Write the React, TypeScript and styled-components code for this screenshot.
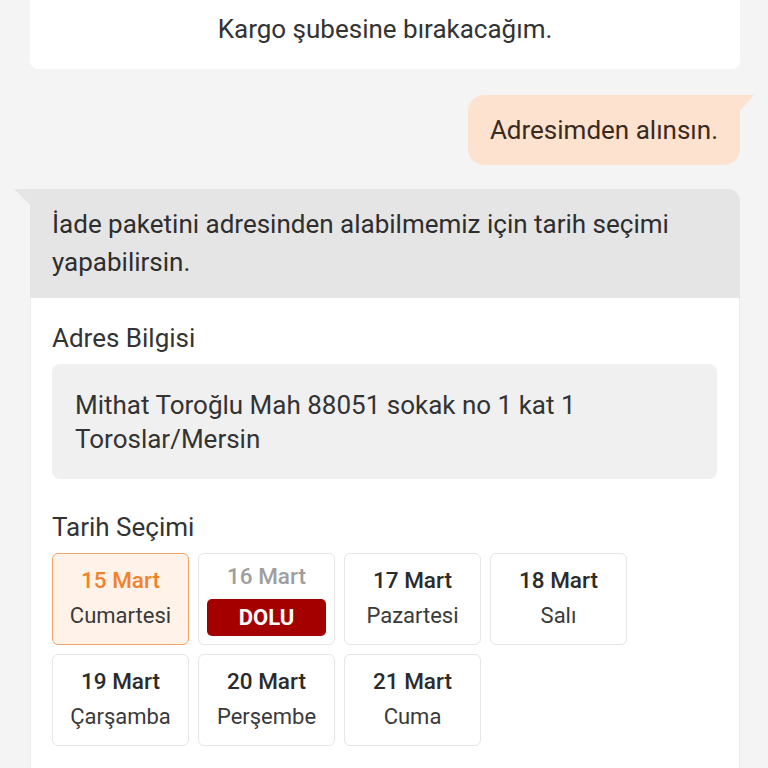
import styled, { createGlobalStyle } from 'styled-components';

const GlobalStyle = createGlobalStyle`
  html, body {
    margin: 0;
    padding: 0;
    background: #f4f4f4;
  }
  body {
    font-family: Roboto, 'Noto Sans', sans-serif;
    color: #333333;
    overflow: hidden;
  }
`;

type Day = {
  date: string;
  name: string;
  selected?: boolean;
  full?: boolean;
};

const days: Day[] = [
  { date: '15 Mart', name: 'Cumartesi', selected: true },
  { date: '16 Mart', name: '', full: true },
  { date: '17 Mart', name: 'Pazartesi' },
  { date: '18 Mart', name: 'Salı' },
  { date: '19 Mart', name: 'Çarşamba' },
  { date: '20 Mart', name: 'Perşembe' },
  { date: '21 Mart', name: 'Cuma' },
];

const Page = styled.div`
  width: 768px;
  height: 768px;
  overflow: hidden;
  padding: 0 28px 0 30px;
  box-sizing: border-box;
  display: flex;
  flex-direction: column;
`;

const OptionCard = styled.div`
  margin-top: -20px;
  background: #ffffff;
  border-radius: 8px;
  padding: 32px 0 23px;
  text-align: center;
  font-size: 26px;
  line-height: 34px;
`;

const UserRow = styled.div`
  margin-top: 26px;
  display: flex;
  justify-content: flex-end;
`;

const UserBubble = styled.div`
  position: relative;
  background: #fde3cf;
  border-radius: 16px 0 16px 16px;
  padding: 18px 22px 18px 22px;
  font-size: 26px;
  line-height: 34px;
  color: #3a2a20;

  &::after {
    content: '';
    position: absolute;
    top: 0;
    right: -14px;
    width: 14px;
    height: 16px;
    background: #fde3cf;
    clip-path: polygon(0 0, 100% 0, 0 100%);
  }
`;

const BotCard = styled.div`
  margin-top: 24px;
  display: flex;
  flex-direction: column;
`;

const BotHeader = styled.div`
  position: relative;
  background: #e5e5e5;
  border-radius: 0 12px 0 0;
  padding: 16px 22px 17px;
  font-size: 26px;
  line-height: 38px;
  color: #2e2e2e;

  &::before {
    content: '';
    position: absolute;
    top: 0;
    left: -16px;
    width: 16px;
    height: 16px;
    background: #e5e5e5;
    clip-path: polygon(0 0, 100% 0, 100% 100%);
  }
`;

const BotBody = styled.div`
  background: #ffffff;
  border-left: 1px solid #ededed;
  border-right: 1px solid #ededed;
  padding: 24px 22px 40px 21px;
  display: flex;
  flex-direction: column;
`;

const SectionLabel = styled.div<{ $gap?: number }>`
  margin-top: ${(p) => p.$gap ?? 0}px;
  font-size: 26px;
  line-height: 32px;
  color: #333333;
`;

const AddressBox = styled.div`
  margin-top: 10px;
  background: #f0f0f0;
  border-radius: 8px;
  padding: 24px 23px 23px;
  font-size: 26px;
  line-height: 34px;
  color: #333333;
`;

const DateGrid = styled.div`
  margin-top: 10px;
  display: grid;
  grid-template-columns: repeat(4, 137px);
  grid-auto-rows: 92px;
  gap: 9px;
`;

const DateCard = styled.div<{ $selected?: boolean }>`
  box-sizing: border-box;
  border: 1px solid ${(p) => (p.$selected ? '#f0a46a' : '#e6e6e6')};
  background: ${(p) => (p.$selected ? '#fff2e8' : '#ffffff')};
  border-radius: 6px;
  padding: 8px 8px 0;
  display: flex;
  flex-direction: column;
  align-items: center;
`;

const DateText = styled.div<{ $tone: 'normal' | 'selected' | 'muted' }>`
  font-size: 22.5px;
  font-weight: 500;
  line-height: ${(p) => (p.$tone === 'muted' ? 28 : 36)}px;
  color: ${(p) =>
    p.$tone === 'selected' ? '#f0822c' : p.$tone === 'muted' ? '#9e9e9e' : '#2b2b2b'};
`;

const DayText = styled.div`
  font-size: 22px;
  line-height: 36px;
  color: #3a3a3a;
`;

const FullBadge = styled.div`
  margin-top: 9px;
  align-self: stretch;
  height: 37px;
  background: #a50000;
  border-radius: 5px;
  color: #ffffff;
  font-size: 22px;
  font-weight: 700;
  line-height: 37px;
  text-align: center;
`;

const App = () => {
  return (
    <Page>
      <GlobalStyle />
      <OptionCard>Kargo şubesine bırakacağım.</OptionCard>
      <UserRow>
        <UserBubble>Adresimden alınsın.</UserBubble>
      </UserRow>
      <BotCard>
        <BotHeader>
          İade paketini adresinden alabilmemiz için tarih seçimi
          <br />
          yapabilirsin.
        </BotHeader>
        <BotBody>
          <SectionLabel>Adres Bilgisi</SectionLabel>
          <AddressBox>
            Mithat Toroğlu Mah 88051 sokak no 1 kat 1
            <br />
            Toroslar/Mersin
          </AddressBox>
          <SectionLabel $gap={32}>Tarih Seçimi</SectionLabel>
          <DateGrid>
            {days.map((d) => (
              <DateCard key={d.date} $selected={d.selected}>
                <DateText $tone={d.selected ? 'selected' : d.full ? 'muted' : 'normal'}>
                  {d.date}
                </DateText>
                {d.full ? <FullBadge>DOLU</FullBadge> : <DayText>{d.name}</DayText>}
              </DateCard>
            ))}
          </DateGrid>
        </BotBody>
      </BotCard>
    </Page>
  );
};

export default App;
